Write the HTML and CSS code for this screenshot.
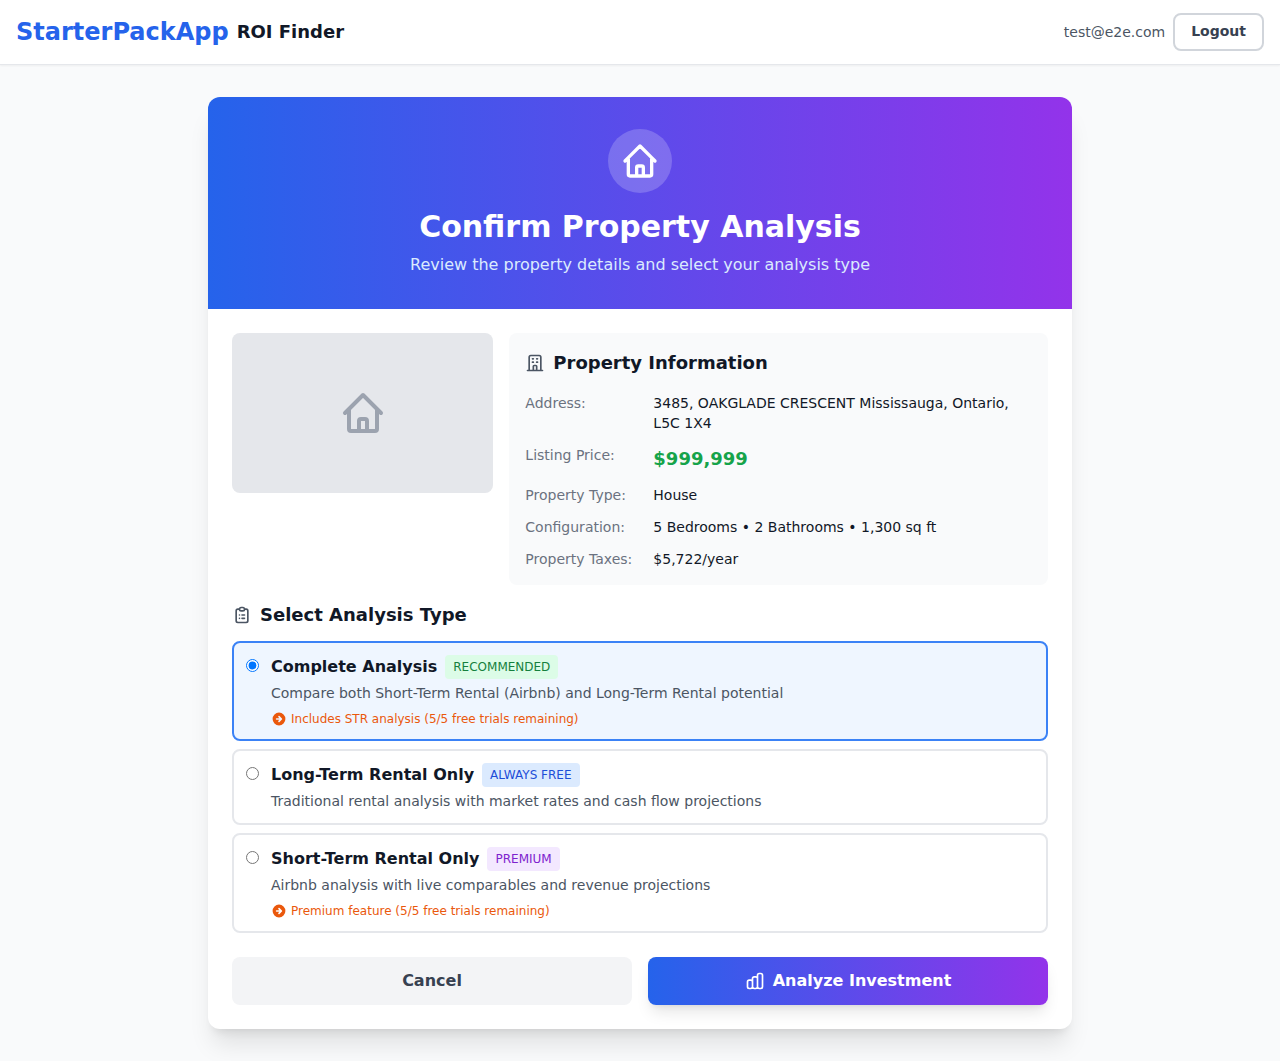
FILE: index.html
```html
<!DOCTYPE html>
<html lang="en">
<head>
  <meta charset="UTF-8" />
  <title>StarterPackApp – ROI Finder</title>
  <meta name="viewport" content="width=device-width, initial-scale=1.0" />
  <link rel="stylesheet" href="styles.css">
</head>
<body>

  <nav class="navbar">
    <div class="brand">
      <span class="brand-logo">StarterPackApp</span>
      <span class="brand-page">ROI Finder</span>
    </div>
    <div class="user-box">
      <span class="user-email">test@e2e.com</span>
      <button class="logout-btn" type="button">Logout</button>
    </div>
  </nav>

  <main class="page">
    <section class="card">
      <header class="card-header">
        <div class="header-icon">
          <svg class="icon-40" viewBox="0 0 24 24" fill="none" stroke="currentColor" stroke-width="2" stroke-linecap="round" stroke-linejoin="round"><path d="M3 12l2-2m0 0l7-7 7 7M5 10v10a1 1 0 001 1h3m10-11l2 2m-2-2v10a1 1 0 01-1 1h-3m-6 0a1 1 0 001-1v-4a1 1 0 011-1h2a1 1 0 011 1v4a1 1 0 001 1m-6 0h6"/></svg>
        </div>
        <h1 class="header-title">Confirm Property Analysis</h1>
        <p class="header-sub">Review the property details and select your analysis type</p>
      </header>

      <div class="card-body">
        <div class="property-grid">
          <div class="property-photo">
            <svg class="icon-48" viewBox="0 0 24 24" fill="none" stroke="currentColor" stroke-width="2" stroke-linecap="round" stroke-linejoin="round"><path d="M3 12l2-2m0 0l7-7 7 7M5 10v10a1 1 0 001 1h3m10-11l2 2m-2-2v10a1 1 0 01-1 1h-3m-6 0a1 1 0 001-1v-4a1 1 0 011-1h2a1 1 0 011 1v4a1 1 0 001 1m-6 0h6"/></svg>
          </div>
          <div class="property-info">
            <h2 class="section-title info-title">
              <svg class="icon-20 icon-grey" viewBox="0 0 24 24" fill="none" stroke="currentColor" stroke-width="2" stroke-linecap="round" stroke-linejoin="round"><path d="M19 21V5a2 2 0 00-2-2H7a2 2 0 00-2 2v16m14 0h2m-2 0h-5m-9 0H3m2 0h5M9 7h1m-1 4h1m4-4h1m-1 4h1m-5 10v-5a1 1 0 011-1h2a1 1 0 011 1v5m-4 0h4"/></svg>
              Property Information
            </h2>
            <div class="info-rows">
              <div class="info-row">
                <span class="info-label">Address:</span>
                <span class="info-value">3485, OAKGLADE CRESCENT Mississauga, Ontario, L5C 1X4</span>
              </div>
              <div class="info-row">
                <span class="info-label">Listing Price:</span>
                <span class="info-price">$999,999</span>
              </div>
              <div class="info-row">
                <span class="info-label">Property Type:</span>
                <span class="info-value">House</span>
              </div>
              <div class="info-row">
                <span class="info-label">Configuration:</span>
                <span class="info-value">5 Bedrooms • 2 Bathrooms • 1,300 sq ft</span>
              </div>
              <div class="info-row">
                <span class="info-label">Property Taxes:</span>
                <span class="info-value">$5,722/year</span>
              </div>
            </div>
          </div>
        </div>

        <h2 class="section-title analysis-title">
          <svg class="icon-20 icon-grey" viewBox="0 0 24 24" fill="none" stroke="currentColor" stroke-width="2" stroke-linecap="round" stroke-linejoin="round"><path d="M9 5H7a2 2 0 00-2 2v12a2 2 0 002 2h10a2 2 0 002-2V7a2 2 0 00-2-2h-2M9 5a2 2 0 002 2h2a2 2 0 002-2M9 5a2 2 0 012-2h2a2 2 0 012 2m-3 7h3m-3 4h3m-6-4h.01M9 16h.01"/></svg>
          Select Analysis Type
        </h2>

        <form class="options">
          <label class="option option-selected">
            <input class="option-radio" type="radio" name="analysis" checked />
            <div class="option-text">
              <div class="option-head">
                <span class="option-name">Complete Analysis</span>
                <span class="badge badge-green">RECOMMENDED</span>
              </div>
              <p class="option-desc">Compare both Short-Term Rental (Airbnb) and Long-Term Rental potential</p>
              <p class="option-note">
                <svg class="icon-16" viewBox="0 0 20 20" fill="currentColor"><path fill-rule="evenodd" clip-rule="evenodd" d="M10 18a8 8 0 100-16 8 8 0 000 16zm3.707-8.707l-3-3a1 1 0 00-1.414 1.414L10.586 9H7a1 1 0 100 2h3.586l-1.293 1.293a1 1 0 101.414 1.414l3-3a1 1 0 000-1.414z"/></svg>
                Includes STR analysis (5/5 free trials remaining)
              </p>
            </div>
          </label>

          <label class="option">
            <input class="option-radio" type="radio" name="analysis" />
            <div class="option-text">
              <div class="option-head">
                <span class="option-name">Long-Term Rental Only</span>
                <span class="badge badge-blue">ALWAYS FREE</span>
              </div>
              <p class="option-desc">Traditional rental analysis with market rates and cash flow projections</p>
            </div>
          </label>

          <label class="option">
            <input class="option-radio" type="radio" name="analysis" />
            <div class="option-text">
              <div class="option-head">
                <span class="option-name">Short-Term Rental Only</span>
                <span class="badge badge-purple">PREMIUM</span>
              </div>
              <p class="option-desc">Airbnb analysis with live comparables and revenue projections</p>
              <p class="option-note">
                <svg class="icon-16" viewBox="0 0 20 20" fill="currentColor"><path fill-rule="evenodd" clip-rule="evenodd" d="M10 18a8 8 0 100-16 8 8 0 000 16zm3.707-8.707l-3-3a1 1 0 00-1.414 1.414L10.586 9H7a1 1 0 100 2h3.586l-1.293 1.293a1 1 0 101.414 1.414l3-3a1 1 0 000-1.414z"/></svg>
                Premium feature (5/5 free trials remaining)
              </p>
            </div>
          </label>
        </form>

        <div class="actions">
          <button class="btn btn-cancel" type="button">Cancel</button>
          <button class="btn btn-analyze" type="button">
            <svg class="icon-20" viewBox="0 0 24 24" fill="none" stroke="currentColor" stroke-width="2" stroke-linecap="round" stroke-linejoin="round"><path d="M9 19v-6a2 2 0 00-2-2H5a2 2 0 00-2 2v6a2 2 0 002 2h2a2 2 0 002-2zm0 0V9a2 2 0 012-2h2a2 2 0 012 2v10m-6 0a2 2 0 002 2h2a2 2 0 002-2m0 0V5a2 2 0 012-2h2a2 2 0 012 2v14a2 2 0 01-2 2h-2a2 2 0 01-2-2z"/></svg>
            Analyze Investment
          </button>
        </div>
      </div>
    </section>
  </main>

</body>
</html>
```

FILE: styles.css
```css
* {
  box-sizing: border-box;
}

body {
  margin: 0;
  font-family: "DejaVu Sans", sans-serif;
  background-color: #f9fafb;
  color: #111827;
}

h1, h2, p {
  margin: 0;
}

svg {
  display: block;
  flex-shrink: 0;
}

.icon-16 { width: 16px; height: 16px; }
.icon-20 { width: 20px; height: 20px; }
.icon-40 { width: 40px; height: 40px; }
.icon-48 { width: 48px; height: 48px; }
.icon-grey { color: #4b5563; }

/* top bar */
.navbar {
  display: flex;
  justify-content: space-between;
  align-items: center;
  height: 65px;
  padding: 0 16px;
  background-color: #fff;
  border-bottom: 1px solid #e5e7eb;
  box-shadow: 0 1px 2px rgba(0, 0, 0, 0.05);
}

.brand {
  display: flex;
  align-items: center;
  gap: 8px;
}

.brand-logo {
  font-size: 24px;
  line-height: 32px;
  font-weight: 700;
  color: #2563eb;
}

.brand-page {
  font-size: 18px;
  line-height: 28px;
  font-weight: 700;
}

.user-box {
  display: flex;
  align-items: center;
  gap: 8px;
}

.user-email {
  font-size: 14px;
  color: #4b5563;
}

.logout-btn {
  padding: 6px 16px 8px;
  font-family: inherit;
  font-size: 14px;
  line-height: 20px;
  font-weight: 700;
  color: #374151;
  background-color: #fff;
  border: 2px solid #d1d5db;
  border-radius: 8px;
}

/* main card */
.page {
  padding: 32px 16px;
}

.card {
  width: 864px;
  margin: 0 auto;
  background-color: #fff;
  border-radius: 12px;
  overflow: hidden;
  box-shadow: 0 20px 25px -5px rgba(0, 0, 0, 0.1), 0 8px 10px -6px rgba(0, 0, 0, 0.1);
}

.card-header {
  display: flex;
  flex-direction: column;
  align-items: center;
  padding: 32px;
  color: #fff;
  background: linear-gradient(to right, #2563eb, #9333ea);
}

.header-icon {
  display: flex;
  justify-content: center;
  align-items: center;
  width: 64px;
  height: 64px;
  margin-bottom: 16px;
  border-radius: 50%;
  background-color: rgba(255, 255, 255, 0.2);
}

.header-title {
  font-size: 30px;
  line-height: 36px;
  font-weight: 700;
}

.header-sub {
  margin-top: 8px;
  font-size: 16px;
  line-height: 24px;
  color: #dbeafe;
}

.card-body {
  padding: 24px;
}

.property-grid {
  display: grid;
  grid-template-columns: repeat(3, 1fr);
  gap: 16px;
  align-items: start;
}

.property-photo {
  display: flex;
  justify-content: center;
  align-items: center;
  height: 160px;
  color: #9ca3af;
  background-color: #e5e7eb;
  border-radius: 8px;
}

.property-info {
  grid-column: span 2;
  padding: 16px;
  background-color: #f9fafb;
  border-radius: 8px;
}

.section-title {
  display: flex;
  align-items: center;
  gap: 8px;
  font-size: 18px;
  line-height: 28px;
  font-weight: 700;
}

.info-title {
  margin-bottom: 16px;
}

.info-rows {
  display: flex;
  flex-direction: column;
  gap: 12px;
  font-size: 14px;
  line-height: 20px;
}

.info-row {
  display: flex;
  align-items: flex-start;
}

.info-label {
  flex: 0 0 128px;
  color: #6b7280;
}

.info-price {
  font-size: 18px;
  line-height: 28px;
  font-weight: 700;
  color: #16a34a;
}

/* analysis type */
.analysis-title {
  margin-top: 16px;
  margin-bottom: 12px;
}

.options {
  display: flex;
  flex-direction: column;
  gap: 8px;
}

.option {
  display: flex;
  align-items: flex-start;
  padding: 12px;
  border: 2px solid #e5e7eb;
  border-radius: 8px;
  cursor: pointer;
}

.option-selected {
  border-color: #3b82f6;
  background-color: #eff6ff;
}

.option-radio {
  width: 13px;
  height: 13px;
  margin: 4px 12px 0 0;
}

.option-head {
  display: flex;
  align-items: center;
  gap: 8px;
}

.option-name {
  font-size: 16px;
  line-height: 24px;
  font-weight: 700;
}

.badge {
  padding: 4px 8px;
  font-size: 12px;
  line-height: 16px;
  border-radius: 4px;
}

.badge-green { color: #15803d; background-color: #dcfce7; }
.badge-blue { color: #1d4ed8; background-color: #dbeafe; }
.badge-purple { color: #7e22ce; background-color: #f3e8ff; }

.option-desc {
  margin-top: 4px;
  font-size: 14px;
  line-height: 20px;
  color: #4b5563;
}

.option-note {
  display: flex;
  align-items: center;
  gap: 4px;
  margin-top: 8px;
  font-size: 12px;
  line-height: 16px;
  color: #ea580c;
}

/* buttons */
.actions {
  display: flex;
  gap: 16px;
  margin-top: 24px;
}

.btn {
  display: flex;
  flex: 1;
  justify-content: center;
  align-items: center;
  gap: 8px;
  padding: 12px 16px;
  font-family: inherit;
  font-size: 16px;
  line-height: 24px;
  font-weight: 700;
  border: none;
  border-radius: 8px;
  cursor: pointer;
}

.btn-cancel {
  color: #374151;
  background-color: #f3f4f6;
}

.btn-analyze {
  color: #fff;
  background: linear-gradient(to right, #2563eb, #9333ea);
  box-shadow: 0 10px 15px -3px rgba(0, 0, 0, 0.1), 0 4px 6px -4px rgba(0, 0, 0, 0.1);
}
```
